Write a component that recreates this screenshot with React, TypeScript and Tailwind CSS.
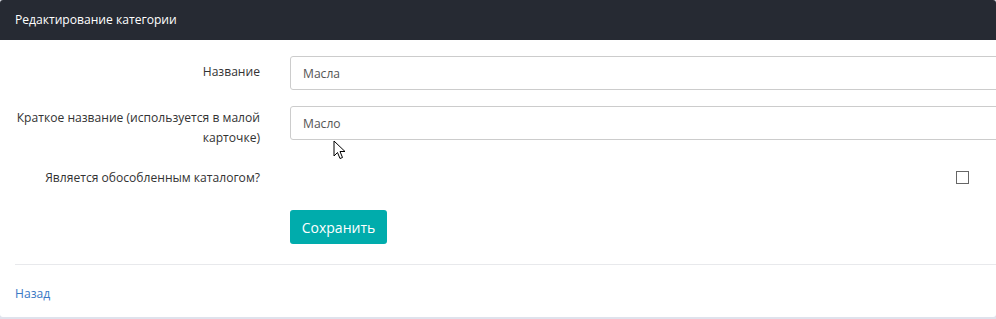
import React from 'react';

const Row = ({ label, children, className = '' }: { label: React.ReactNode; children: React.ReactNode; className?: string }) => (
  <div className={`flex ${className}`}>
    <div className="w-[290px] shrink-0 pr-[30px] pl-[15px] text-right leading-[20px] text-[#333]">{label}</div>
    <div className="flex-1 overflow-hidden">{children}</div>
  </div>
);

const App = () => {
  return (
    <div className="relative h-[319px] w-full overflow-hidden bg-[#dfe2ec] font-['Open_Sans',sans-serif] text-[12.1px]">
      <div className="h-[317px] rounded-[3px] bg-white">
        <div className="flex h-[40px] items-center rounded-t-[3px] bg-[#262a33] px-[15px] text-white">
          Редактирование категории
        </div>

        <div className="pt-[16px]">
          <Row label={<div className="pt-[6px]">Название</div>}>
            <input
              readOnly
              value="Масла"
              className="h-[34px] w-[740px] rounded-[3px] border border-[#ccc] px-[12px] text-[12.1px] text-[#555] outline-none"
            />
          </Row>

          <Row label={<div className="pt-[2px]">Краткое название (используется в малой карточке)</div>} className="mt-[16px]">
            <input
              readOnly
              value="Масло"
              className="h-[34px] w-[740px] rounded-[3px] border border-[#ccc] px-[12px] text-[12.1px] text-[#555] outline-none"
            />
          </Row>

          <Row label={<div className="pt-[8px]">Является обособленным каталогом?</div>} className="mt-[12px]">
            <div className="flex h-[34px] items-center justify-end pr-[27px]">
              <span className="block h-[13px] w-[13px] border border-[#666] bg-white" />
            </div>
          </Row>

          <div className="mt-[16px] pl-[290px]">
            <button className="h-[34px] w-[97px] rounded-[3px] bg-[#00acac] text-[14px] text-white">Сохранить</button>
          </div>
        </div>

        <div className="mt-[20px] ml-[15px] border-t border-[#e8e9ec] pt-[19px]">
          <a className="leading-[20px] text-[#3a78c4]">Назад</a>
        </div>
      </div>

      <svg className="absolute left-[333px] top-[140px]" width="14" height="21" viewBox="0 0 14 21">
        <path d="M1 1 L1 16 L4.5 12.5 L7 18.5 L9.5 17.5 L7 11.5 L12 11.5 Z" fill="white" stroke="black" strokeWidth="1" strokeLinejoin="round" />
      </svg>
    </div>
  );
};

export default App;
